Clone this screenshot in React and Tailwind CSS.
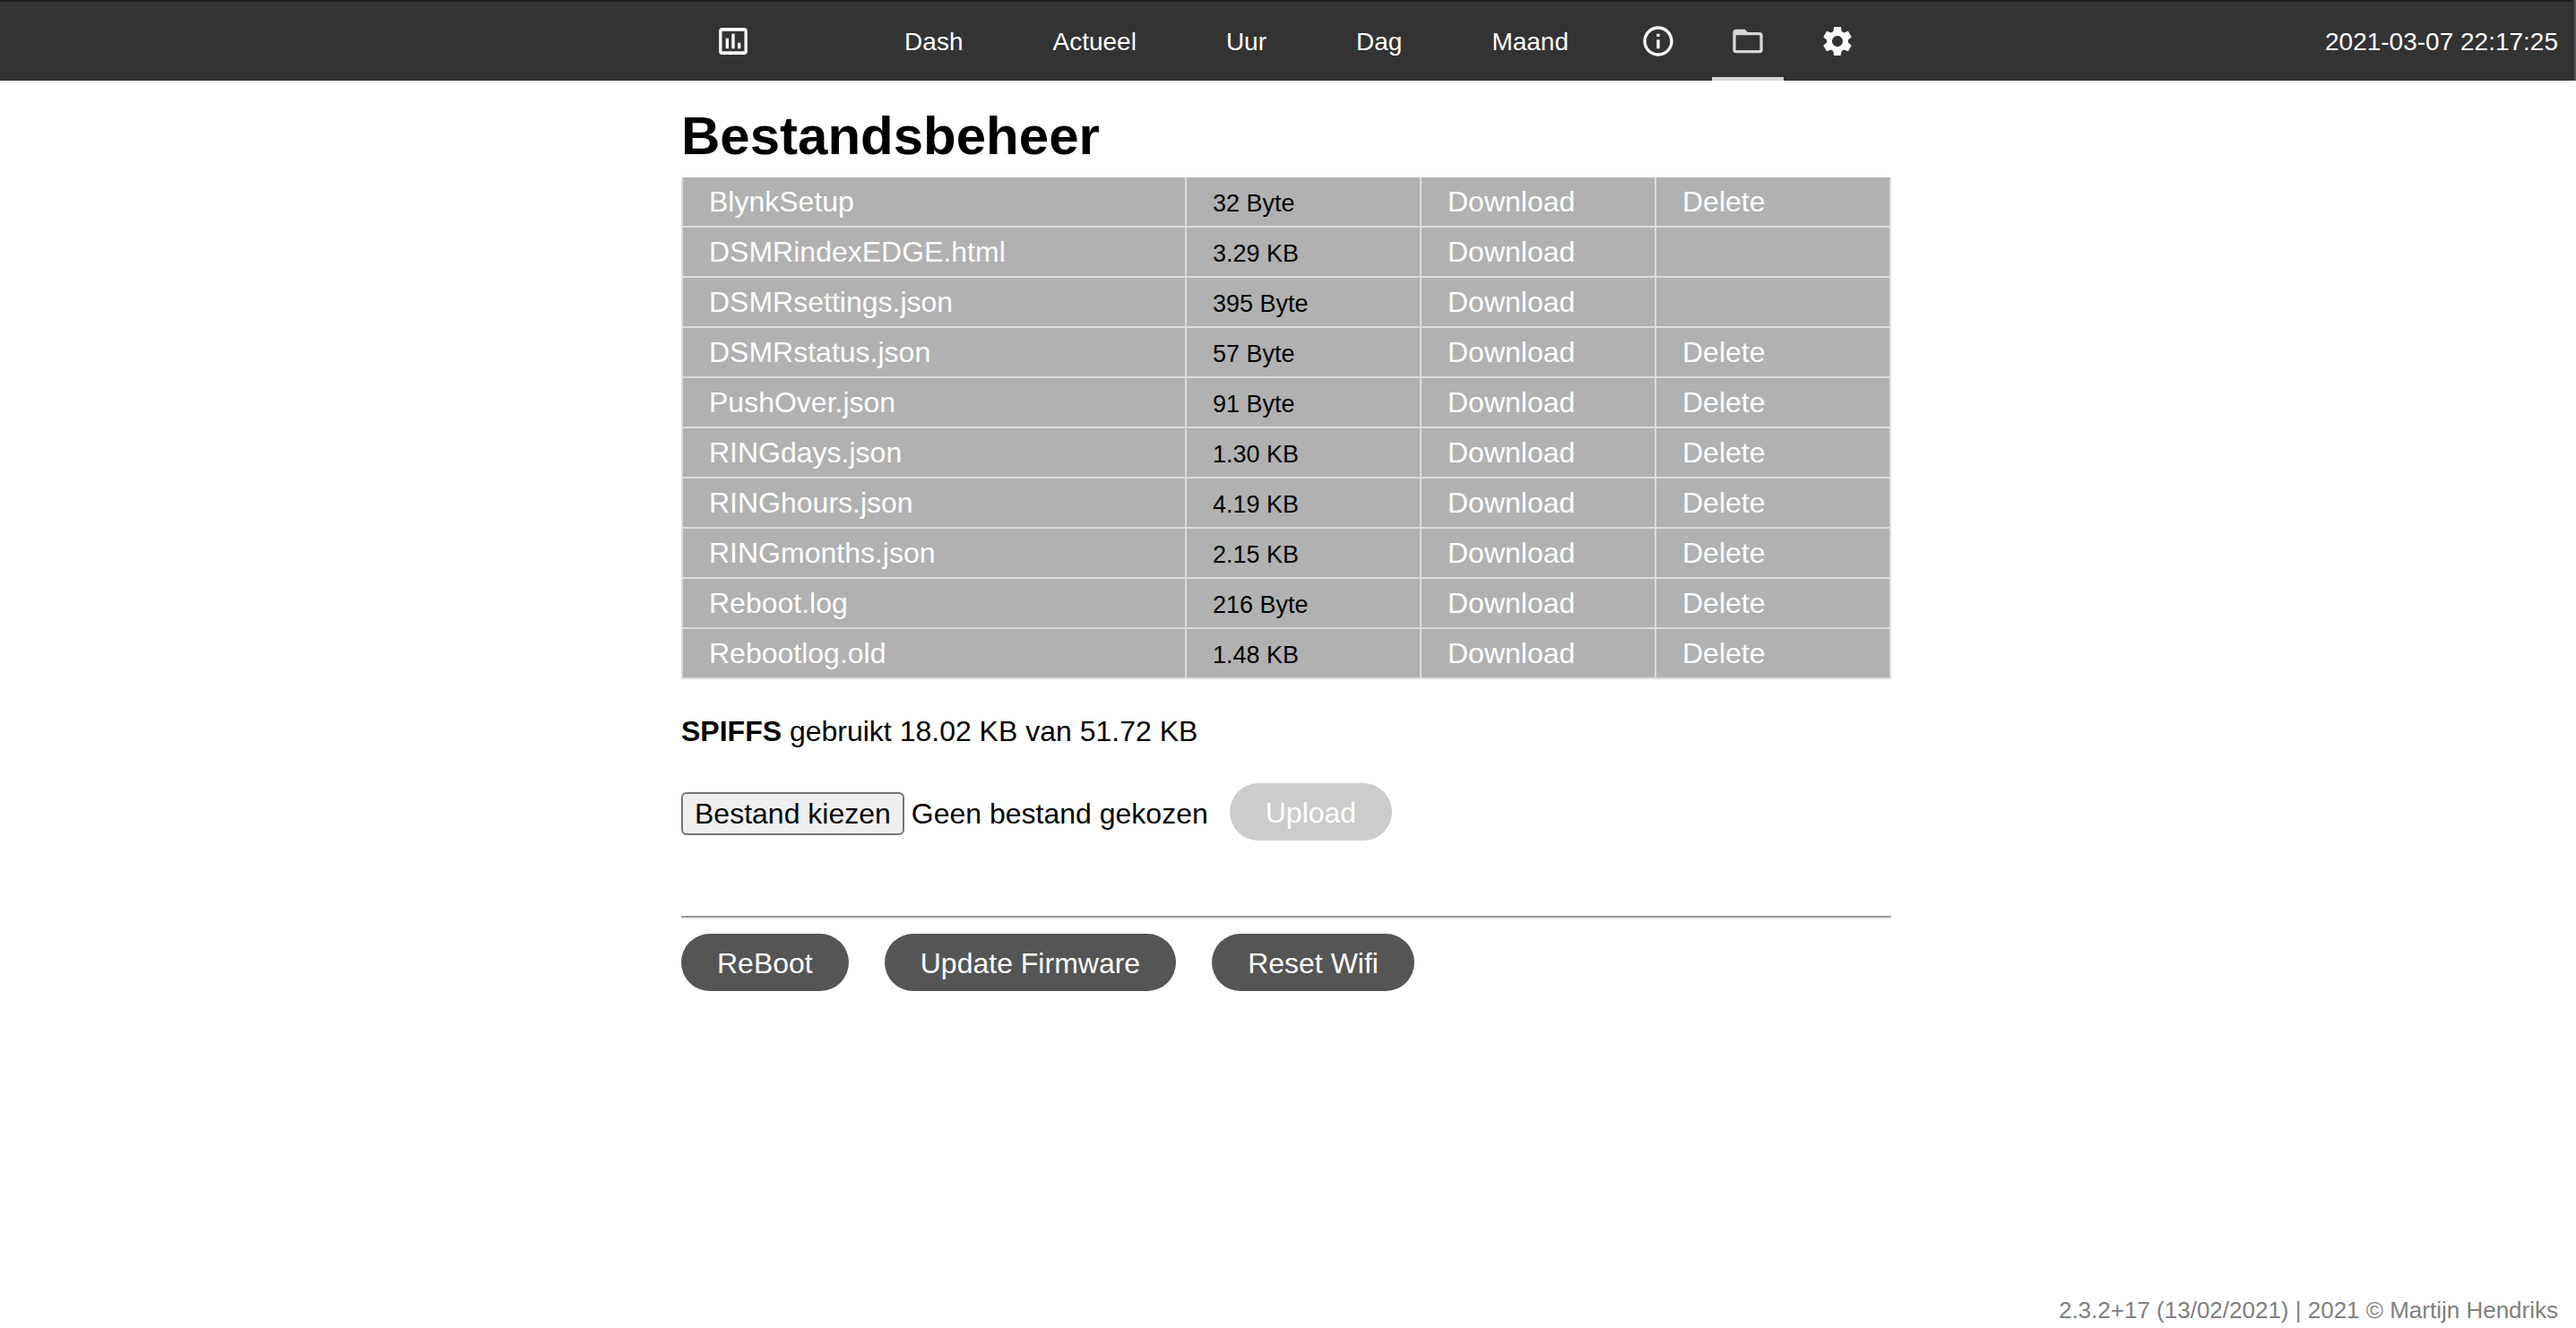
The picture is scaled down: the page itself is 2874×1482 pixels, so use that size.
import React, { useRef } from "react";
import { MdInfoOutline, MdFolderOpen, MdSettings } from "react-icons/md";

const files = [
  ["BlynkSetup", "32 Byte", true],
  ["DSMRindexEDGE.html", "3.29 KB", false],
  ["DSMRsettings.json", "395 Byte", false],
  ["DSMRstatus.json", "57 Byte", true],
  ["PushOver.json", "91 Byte", true],
  ["RINGdays.json", "1.30 KB", true],
  ["RINGhours.json", "4.19 KB", true],
  ["RINGmonths.json", "2.15 KB", true],
  ["Reboot.log", "216 Byte", true],
  ["Rebootlog.old", "1.48 KB", true],
];

const tabs = ["Dash", "Actueel", "Uur", "Dag", "Maand"];

function ChartIcon({ className }) {
  return (
    <svg viewBox="0 0 24 24" fill="currentColor" aria-hidden="true" className={className}>
      <path d="M9 17H7v-7h2v7zm4 0h-2V7h2v10zm4 0h-2v-4h2v4zm2.5 1.8h-15V5.2h15v13.6zm0-15.8h-15c-1.1 0-2 .9-2 2v14c0 1.1.9 2 2 2h15c1.1 0 2-.9 2-2V5c0-1.1-.9-2-2-2z" />
    </svg>
  );
}

function IconTab({ icon: Icon, label, active }) {
  return (
    <a
      href="#"
      aria-label={label}
      className={
        active
          ? "flex items-center border-b-4 border-[#d6d6d6] px-5 pt-1 text-[#d6d6d6]"
          : "flex items-center px-5"
      }
    >
      <Icon className="size-10" />
    </a>
  );
}

function Header() {
  return (
    <header className="grid h-[90px] grid-cols-[1fr_minmax(0,1350px)_1fr] items-stretch border-t-2 border-b border-t-[#1e1e1e] border-b-[#352f35] bg-[#333] text-[28px] text-white">
      <nav className="col-start-2 -mb-px flex justify-between pr-[20px]">
        <a href="#" aria-label="Home" className="flex items-center pl-[38px]">
          <ChartIcon className="size-10" />
        </a>
        <div className="flex gap-5">
          {tabs.map((t) => (
            <a key={t} href="#" className="flex items-center px-10 pt-0.5">
              {t}
            </a>
          ))}
          <IconTab icon={MdInfoOutline} label="Info" />
          <IconTab icon={MdFolderOpen} label="Bestanden" active />
          <IconTab icon={MdSettings} label="Instellingen" />
        </div>
      </nav>
      <time className="self-center justify-self-end pt-0.5 pr-4 whitespace-nowrap">
        2021-03-07 22:17:25
      </time>
    </header>
  );
}

const pill = "h-16 rounded-full px-10 pt-0.5 text-[32px] text-white";

function FilePicker() {
  const input = useRef(null);
  return (
    <div className="flex items-center gap-2 pt-1">
      <input ref={input} type="file" aria-label="Bestand" className="hidden" />
      <button
        type="button"
        onClick={() => input.current.click()}
        className="h-12 rounded-md border-2 border-[#767676] bg-[#efefef] px-[13px]"
      >
        Bestand kiezen
      </button>
      <span>Geen bestand gekozen</span>
    </div>
  );
}

export default function App() {
  return (
    <div className="flex min-h-screen flex-col bg-white pr-1 font-['Liberation_Sans',Arial,sans-serif] text-black">
      <div className="-mr-1 border-r-2 border-[#555] bg-[#333] pr-0.5">
        <Header />
      </div>
      <main className="mx-auto w-full max-w-[1350px] flex-1 text-[32px] leading-[36px]">
        <h1 className="pt-7 pb-3 text-[60px] leading-[68px] font-bold">Bestandsbeheer</h1>
        <table className="w-full table-fixed border-separate border-spacing-0 border-l-2 border-[#dcdcdc] bg-[#b1b1b1]">
          <colgroup>
            <col />
            <col className="w-[262px]" />
            <col className="w-[262px]" />
            <col className="w-[262px]" />
          </colgroup>
          <tbody>
            {files.map(([name, size, removable]) => (
              <tr
                key={name}
                className="h-14 *:border-r-2 *:border-b-2 *:border-[#dcdcdc] *:py-0 *:pr-0 *:pl-[29px]"
              >
                <td className="text-white">
                  <a href="#">{name}</a>
                </td>
                <td className="text-[27px]">
                  <div className="pt-1">{size}</div>
                </td>
                <td className="text-white">
                  <a href="#">Download</a>
                </td>
                <td className="text-white">{removable && <a href="#">Delete</a>}</td>
              </tr>
            ))}
          </tbody>
        </table>
        <p className="mt-10">
          <b>SPIFFS</b> gebruikt 18.02 KB van 51.72 KB
        </p>
        <form className="mt-10 flex items-center gap-6">
          <FilePicker />
          <button type="button" disabled className={pill + " bg-[#ccc]"}>
            Upload
          </button>
        </form>
        <hr className="mt-[84px] h-1 border-t-2 border-b-2 border-t-[#9a9a9a] border-b-[#eee]" />
        <div className="mt-4 flex gap-10">
          <button type="button" className={pill + " bg-[#555]"}>ReBoot</button>
          <button type="button" className={pill + " bg-[#555]"}>Update Firmware</button>
          <button type="button" className={pill + " bg-[#555]"}>Reset Wifi</button>
        </div>
      </main>
      <footer className="pr-4 pb-1 text-right text-[26px] leading-8 text-[#808080]">
        2.3.2+17 (13/02/2021) | 2021 © Martijn Hendriks
      </footer>
    </div>
  );
}
